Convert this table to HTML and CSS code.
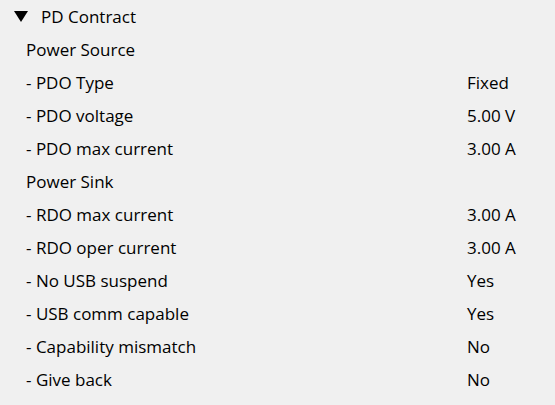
FILE: index.html
```html
<!DOCTYPE html>
<html>
<head>
<meta charset="utf-8">
<link rel="stylesheet" href="styles.css">
</head>
<body>
<div class="tree">
  <div class="row head"><span class="arrow"></span><span class="label">PD Contract</span></div>
  <div class="row group"><span class="label">Power Source</span></div>
  <div class="row"><span class="label">- PDO Type</span><span class="value">Fixed</span></div>
  <div class="row"><span class="label">- PDO voltage</span><span class="value">5.00 V</span></div>
  <div class="row"><span class="label">- PDO max current</span><span class="value">3.00 A</span></div>
  <div class="row group"><span class="label">Power Sink</span></div>
  <div class="row"><span class="label">- RDO max current</span><span class="value">3.00 A</span></div>
  <div class="row"><span class="label">- RDO oper current</span><span class="value">3.00 A</span></div>
  <div class="row"><span class="label">- No USB suspend</span><span class="value">Yes</span></div>
  <div class="row"><span class="label">- USB comm capable</span><span class="value">Yes</span></div>
  <div class="row"><span class="label">- Capability mismatch</span><span class="value">No</span></div>
  <div class="row"><span class="label">- Give back</span><span class="value">No</span></div>
</div>
</body>
</html>
```
FILE: styles.css
```css
html, body {
  margin: 0;
  padding: 0;
  background: #f0f0f0;
}
body {
  font-family: "Open Sans", "Noto Sans", sans-serif;
  font-size: 17px;
  color: #000;
}
.tree {
  display: flex;
  flex-direction: column;
}
.row {
  display: grid;
  grid-template-columns: 441px 1fr;
  height: 33px;
  align-items: center;
  padding-left: 26px;
}
.row.head {
  display: flex;
  padding-left: 14px;
}
.arrow {
  width: 0;
  height: 0;
  border-left: 7.5px solid transparent;
  border-right: 7.5px solid transparent;
  border-top: 11px solid #000;
  margin-right: 13px;
}
```
